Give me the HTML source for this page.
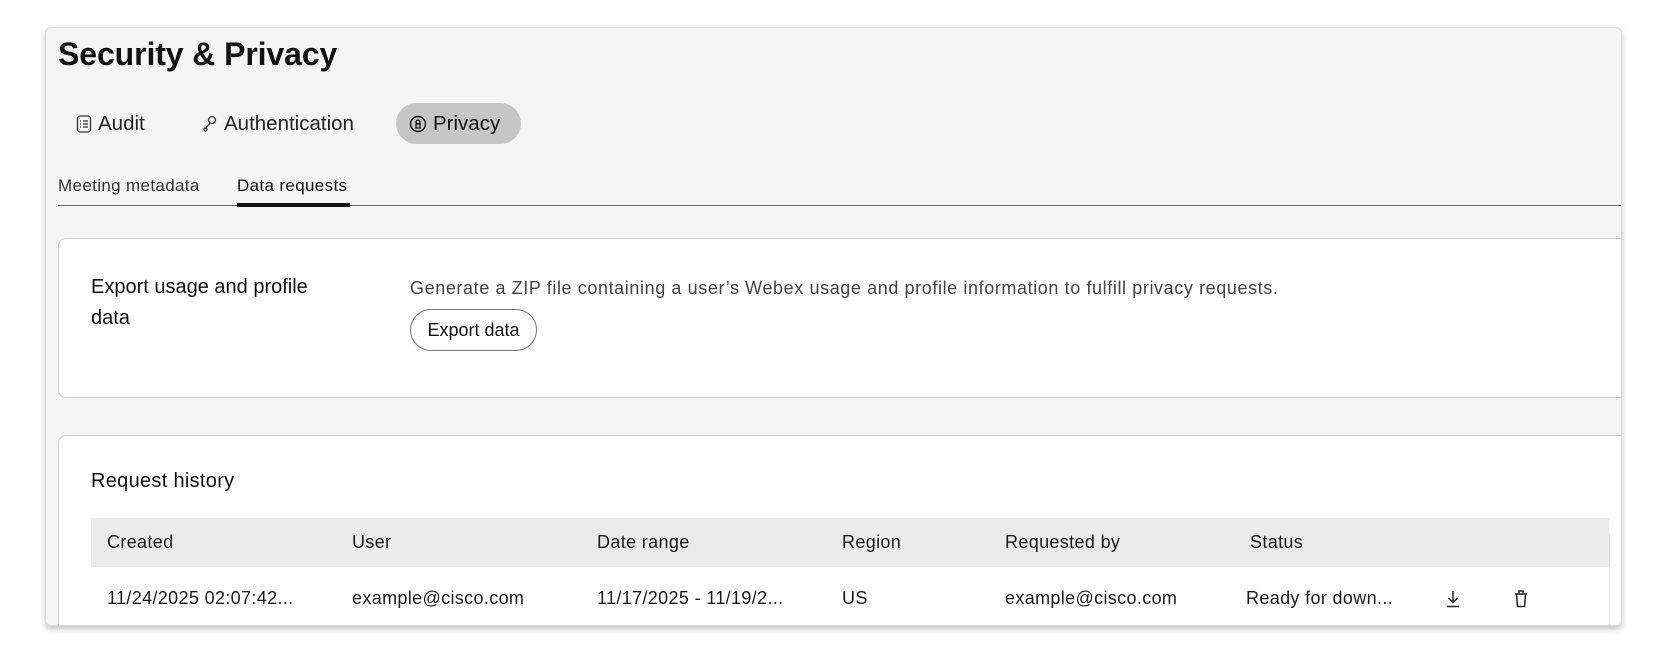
<!DOCTYPE html>
<html><head><style>
*{box-sizing:border-box;margin:0;padding:0}
body{width:1664px;height:650px;background:#fff;font-family:"Liberation Sans",sans-serif;color:#111;position:relative;overflow:hidden}
.panel{position:absolute;left:45px;top:27px;width:1577px;height:599px;background:#f5f5f5;border:1px solid #ddd;border-radius:6px;box-shadow:0 3px 6px rgba(0,0,0,.25);overflow:hidden}
.abs{position:absolute;white-space:nowrap}
h1{position:absolute;left:12px;top:8px;font-size:32px;font-weight:bold;letter-spacing:-0.1px}
.tab{position:absolute;top:86px;font-size:20.5px;line-height:20px;color:#222;display:flex;align-items:center;gap:6px}
.pill{position:absolute;left:350px;top:75px;width:125px;height:41px;border-radius:21px;background:#c6c6c6}
.sub{position:absolute;top:148px;font-size:17px;letter-spacing:0.35px;color:#333}
.line{position:absolute;left:12px;right:0;top:177px;height:1px;background:#666}
.ul{position:absolute;left:191px;width:113px;top:175px;height:4px;background:#111}
.card{position:absolute;left:12px;width:1600px;background:#fff;border:1px solid #ccc;border-radius:8px}
.btn{position:absolute;top:281px;width:127px;height:42px;border:1px solid #777;border-radius:21px;font-size:18px;display:flex;align-items:center;justify-content:center;background:#fff}
.th{position:absolute;left:45px;top:490px;width:1518px;height:49px;background:#ebebeb}
.c{position:absolute;font-size:18px;letter-spacing:0.35px;white-space:nowrap;color:#1a1a1a}
</style></head><body>
<div class="panel">
<h1>Security &amp; Privacy</h1>
<div class="pill"></div>
<div class="tab" style="left:30px"><svg width="16" height="18" viewBox="0 0 16 18"><rect x="1.5" y="1" width="13" height="16" rx="2.5" fill="none" stroke="#333" stroke-width="1.3"/><path d="M4 6h1M7 6h5M4 9h1M7 9h5M4 12h1M7 12h5" stroke="#333" stroke-width="1.2"/></svg>Audit</div>
<div class="tab" style="left:156px"><svg width="16" height="18" viewBox="0 0 16 18"><circle cx="10" cy="5" r="3.5" fill="none" stroke="#333" stroke-width="1.3"/><path d="M8 8L3 14" stroke="#333" stroke-width="1.3"/><circle cx="3.5" cy="14.5" r="1.6" fill="none" stroke="#333" stroke-width="1.2"/></svg>Authentication</div>
<div class="tab" style="left:363px;color:#111"><svg width="18" height="18" viewBox="0 0 18 18"><circle cx="9" cy="9" r="7.5" fill="none" stroke="#111" stroke-width="1.4"/><circle cx="9" cy="7" r="2" fill="none" stroke="#111" stroke-width="1.3"/><rect x="7" y="9" width="4" height="4" fill="none" stroke="#111" stroke-width="1.3"/></svg>Privacy</div>
<div class="sub" style="left:12px">Meeting metadata</div>
<div class="sub" style="left:191px;color:#111">Data requests</div>
<div class="line"></div><div class="ul"></div>
<div class="card" style="top:210px;height:160px"></div>
<div class="abs" style="left:45px;top:244px;font-size:20px;line-height:31px;white-space:normal;width:250px">Export usage and profile data</div>
<div class="abs" style="left:364px;top:250px;font-size:18px;letter-spacing:0.6px;color:#444">Generate a ZIP file containing a user’s Webex usage and profile information to fulfill privacy requests.</div>
<div class="btn" style="left:364px">Export data</div>
<div class="card" style="top:407px;height:220px"></div>
<div class="abs" style="left:45px;top:442px;font-size:20px;letter-spacing:0.3px">Request history</div>
<div class="th"></div>
<div style="position:absolute;left:1563px;top:505px;width:1px;height:100px;background:#e4e4e4"></div>
<div class="c" style="left:61px;top:504px">Created</div>
<div class="c" style="left:306px;top:504px">User</div>
<div class="c" style="left:551px;top:504px">Date range</div>
<div class="c" style="left:796px;top:504px">Region</div>
<div class="c" style="left:959px;top:504px">Requested by</div>
<div class="c" style="left:1204px;top:504px">Status</div>
<div class="c" style="left:61px;top:560px">11/24/2025 02:07:42...</div>
<div class="c" style="left:306px;top:560px">example@cisco.com</div>
<div class="c" style="left:551px;top:560px">11/17/2025 - 11/19/2...</div>
<div class="c" style="left:796px;top:560px">US</div>
<div class="c" style="left:959px;top:560px">example@cisco.com</div>
<div class="c" style="left:1200px;top:560px">Ready for down...</div>
<svg class="abs" style="left:1398px;top:561px" width="18" height="20" viewBox="0 0 18 20"><path d="M9 2v11M4.5 9L9 13.5 13.5 9M3 17.5h12" fill="none" stroke="#222" stroke-width="1.5"/></svg>
<svg class="abs" style="left:1467px;top:560px" width="16" height="21" viewBox="0 0 16 21"><path d="M2 6h12M6 6V3h4v3M3.5 6l1 12.5h7l1-12.5" fill="none" stroke="#222" stroke-width="1.5"/></svg>
</div>
</body></html>
